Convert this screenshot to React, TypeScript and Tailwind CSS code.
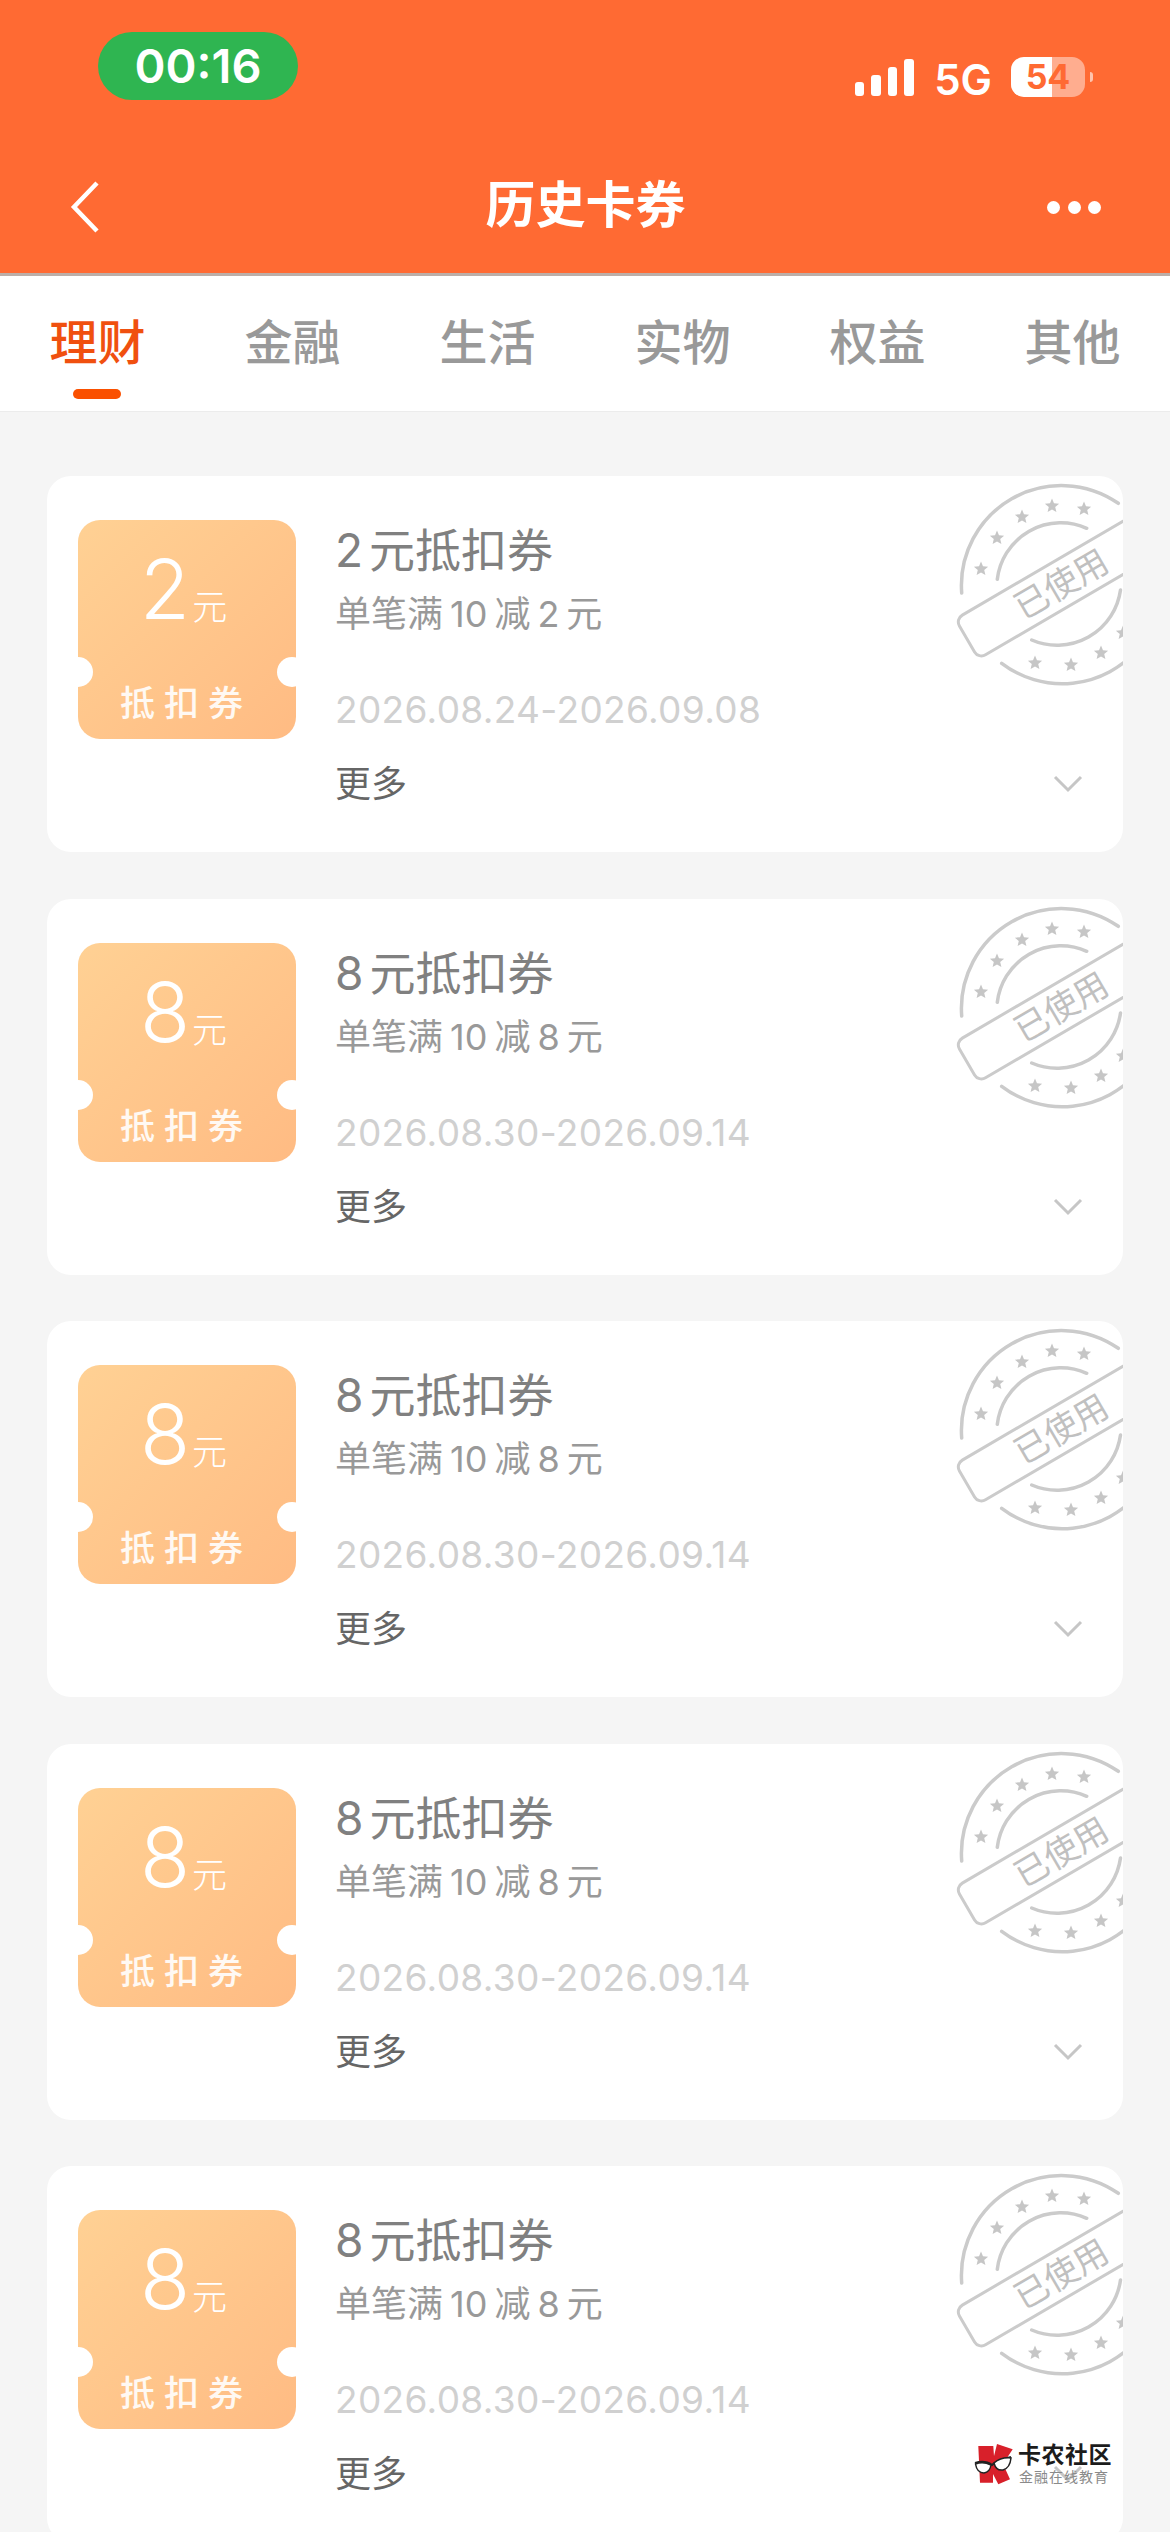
const BASE_FONT = "font-['Inter','Noto_Sans_CJK_SC','Noto_Sans',sans-serif]";

type Coupon = { amount: string; start: string; end: string };

const coupons: Coupon[] = [
  { amount: "2", start: "2026.08.24", end: "2026.09.08" },
  { amount: "8", start: "2026.08.30", end: "2026.09.14" },
  { amount: "8", start: "2026.08.30", end: "2026.09.14" },
  { amount: "8", start: "2026.08.30", end: "2026.09.14" },
  { amount: "8", start: "2026.08.30", end: "2026.09.14" },
];

const tabs = ["理财", "金融", "生活", "实物", "权益", "其他"];

function starPoints(cx: number, cy: number, r: number) {
  const pts: string[] = [];
  for (let i = 0; i < 10; i++) {
    const radius = i % 2 === 0 ? r : r * 0.45;
    const a = -Math.PI / 2 + (i * Math.PI) / 5;
    pts.push(`${cx + radius * Math.cos(a)},${cy + radius * Math.sin(a)}`);
  }
  return pts.join(" ");
}

const stampStars: [number, number][] = [
  [58, 93], [74, 62], [99, 41], [129, 30], [161, 33],
  [112, 187], [148, 189], [178, 177], [200, 157],
];

function UsedStamp() {
  return (
    <svg className="absolute right-0 top-0" width="200" height="240" viewBox="0 0 200 240" fill="none">
      <g stroke="#cbcbcb" strokeWidth="3.5" strokeLinecap="round">
        <path d="M38.7 117 A100 100 0 0 1 195.3 27.3" />
        <path d="M78.7 187.3 A100 100 0 0 0 215 173" />
        <path d="M74.3 103.3 A64 64 0 0 1 163.7 52.3" />
        <path d="M108.7 164 A64 64 0 0 0 197.5 114" />
      </g>
      {stampStars.map(([x, y]) => (
        <polygon key={`${x}-${y}`} points={starPoints(x, y, 7.5)} fill="#c6c6c6" />
      ))}
      <rect
        x="44"
        y="140"
        width="300"
        height="46"
        rx="8"
        fill="#ffffff"
        stroke="#cbcbcb"
        strokeWidth="3"
        transform="rotate(-30.3 44 163)"
      />
      <text
        x="137"
        y="106"
        textAnchor="middle"
        dominantBaseline="central"
        fontSize="34"
        fontWeight="400"
        fontFamily="'Noto Sans CJK SC', sans-serif"
        fill="#c0c0c0"
        transform="rotate(-30.3 137 106)"
      >
        已使用
      </text>
    </svg>
  );
}

function Ticket({ amount }: { amount: string }) {
  return (
    <div className="relative flex h-[219px] w-[218px] shrink-0 flex-col items-center rounded-[22px] bg-gradient-to-br from-[#ffd194] to-[#ffbb83] text-white">
      <div className="mt-[25px] flex h-[90px] items-end pr-[7px]">
        <span className="text-[82px] font-light leading-[90px]">{amount}</span>
        <span className="mb-[8px] ml-[2px] text-[35px] font-light leading-[40px]">元</span>
      </div>
      <div className="mt-[46px] pl-[1px] pr-[3px] text-[35px] font-medium leading-[44px] tracking-[9px] text-white/90">抵扣券</div>
      <span className="absolute left-[-15px] top-[137px] h-[30px] w-[30px] rounded-full bg-white" />
      <span className="absolute right-[-11px] top-[137px] h-[30px] w-[30px] rounded-full bg-white" />
    </div>
  );
}

function CouponCard({ coupon }: { coupon: Coupon }) {
  const { amount, start, end } = coupon;
  return (
    <div className="relative flex h-[376px] shrink-0 overflow-hidden rounded-[24px] bg-white pl-[31px] pt-[44px]">
      <Ticket amount={amount} />
      <div className="ml-[39px] flex flex-col">
        <div className="text-[46px] leading-[60px] text-[#808080]">
          <span className="mr-[6px]">{amount}</span>元抵扣券
        </div>
        <div className="mt-[10px] text-[36px] leading-[48px] text-[#999999]">
          单笔满<span className="mx-[7px]">10</span>减<span className="mx-[7px]">{amount}</span>元
        </div>
        <div className="mt-[48px] text-[37px] leading-[48px] tracking-[0.35px] text-[#d0d0d0]">
          {start}-{end}
        </div>
        <div className="mt-[26px] text-[36px] leading-[48px] text-[#666666]">更多</div>
      </div>
      <UsedStamp />
      <svg className="absolute left-[1006px] top-[299px]" width="30" height="18" viewBox="0 0 30 18" fill="none">
        <path d="M2 2 L15 15 L28 2" stroke="#c6c6c6" strokeWidth="3" />
      </svg>
    </div>
  );
}

// Community watermark: red K wearing glasses, with its name beside it.
function CommunityMark() {
  return (
    <div className="absolute left-[973px] top-[2442px] flex items-center">
      <svg width="45" height="45" viewBox="0 0 45 45">
        <path
          d="M5.3 4 H20.3 L21 14 L24 2 L39.7 7.3 L30 22 L37 37.3 L25.3 42.3 L20 32 L20 40.7 H7 Z"
          fill="#d8202a"
        />
        <path d="M2 21 Q12 18 19 23 Q24 18 38 15" stroke="#222222" strokeWidth="2" fill="none" />
        <path d="M2.5 22 Q4 31 11 31 Q17 30 18 23 Q10 19 2.5 22 Z" fill="#ffffff" stroke="#222222" strokeWidth="1.5" />
        <path d="M21 21 Q23 29 30 28 Q37 26 38 16 Q28 15 21 21 Z" fill="#ffffff" stroke="#222222" strokeWidth="1.5" />
      </svg>
      <div className="flex flex-col">
        <span className="text-[23px] font-bold leading-[25px] tracking-[0.5px] text-[#1c1c1c]">卡农社区</span>
        <span className="ml-[1px] text-[14px] leading-[18px] tracking-[1px] text-[#8a8a8a]">金融在线教育</span>
      </div>
    </div>
  );
}

export default function App() {
  return (
    <div className={`${BASE_FONT} relative flex h-[2532px] w-[1170px] flex-col overflow-hidden bg-[#f5f5f5]`}>
      <header className="h-[276px] shrink-0 border-b-[3px] border-[#bcaea8] bg-[#ff6a33] text-white">
        <div className="flex h-[100px] items-start justify-between pl-[98px] pr-[77px] pt-[32px]">
          <div className="flex h-[68px] w-[200px] items-center justify-center rounded-[34px] bg-[#2fb551] text-[47px] font-semibold">
            00:16
          </div>
          <div className="mt-[11px] flex h-[68px] items-center">
            <div className="flex h-[38px] items-end gap-[7px]">
              <span className="h-[14px] w-[9px] rounded-[3px] bg-white" />
              <span className="h-[21px] w-[10px] rounded-[3px] bg-white" />
              <span className="h-[29px] w-[9px] rounded-[3px] bg-white" />
              <span className="h-[37px] w-[10px] rounded-[3px] bg-white" />
            </div>
            <span className="ml-[20px] mt-[6px] text-[42px] font-semibold leading-[68px]">5G</span>
            <div className="relative ml-[19px] h-[40px] w-[74px] overflow-hidden rounded-[13px] bg-white/45">
              <div className="h-full w-[41px] bg-white" />
              <span className="absolute inset-0 flex items-center justify-center text-[34px] font-bold leading-[40px] text-[#ff6a33]">
                54
              </span>
            </div>
            <span className="ml-[5px] h-[10px] w-[3px] rounded-r-full bg-white/60" />
          </div>
        </div>
        <div className="mt-[72px] flex h-[70px] items-center justify-between pl-[70px] pr-[69px]">
          <div className="w-[54px]">
            <svg width="30" height="52" viewBox="0 0 30 52" fill="none">
              <path d="M27 2 L4 26 L27 50" stroke="#ffffff" strokeWidth="4.5" />
            </svg>
          </div>
          <h1 className="-mt-[4px] text-[50px] font-bold leading-[70px]">历史卡券</h1>
          <div className="flex w-[54px] justify-between">
            <span className="h-[13px] w-[13px] rounded-full bg-white" />
            <span className="h-[13px] w-[13px] rounded-full bg-white" />
            <span className="h-[13px] w-[13px] rounded-full bg-white" />
          </div>
        </div>
      </header>

      <nav className="grid h-[136px] shrink-0 grid-cols-6 border-b border-[#ececec] bg-white">
        {tabs.map((tab, i) => (
          <div key={tab} className="relative flex justify-center pt-[32px]">
            <span
              className={`text-[48px] font-medium leading-[70px] ${i === 0 ? "text-[#f0500f]" : "text-[#999999]"}`}
            >
              {tab}
            </span>
            {i === 0 && (
              <span className="absolute left-[73px] top-[113px] h-[10px] w-[48px] rounded-[5px] bg-[#fa5000]" />
            )}
          </div>
        ))}
      </nav>

      <main className="flex flex-col gap-[46.5px] pl-[47px] pr-[47px] pt-[64px]">
        {coupons.map((coupon, i) => (
          <CouponCard key={i} coupon={coupon} />
        ))}
      </main>

      <CommunityMark />
    </div>
  );
}
